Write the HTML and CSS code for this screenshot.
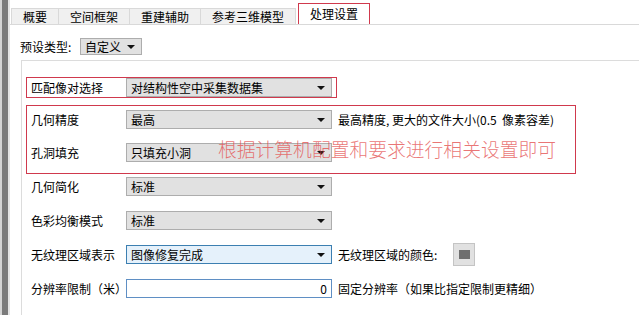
FILE: index.html
```html
<!DOCTYPE html>
<html lang="zh-CN">
  <head>
    <meta charset="UTF-8" />
    <meta name="viewport" content="width=device-width, initial-scale=1.0" />
    <title>处理设置</title>
    <link rel="stylesheet" href="styles.css">
  </head>
  <body>
    <div class="frame">
      <div class="edge"></div>

      <div class="window">
        <div class="tabs">
          <div class="tab">概要</div>
          <div class="tab">空间框架</div>
          <div class="tab">重建辅助</div>
          <div class="tab">参考三维模型</div>
          <div class="tab active">处理设置</div>
        </div>

        <div class="page">
          <div class="preset">
            <span>预设类型:</span>
            <div class="select small">自定义</div>
          </div>

          <div class="group">
            <div class="mark first">
              <div class="row">
                <label>匹配像对选择</label>
                <div class="select">对结构性空中采集数据集</div>
              </div>
            </div>

            <div class="mark second">
              <div class="row">
                <label>几何精度</label>
                <div class="select">最高</div>
                <span class="note">最高精度, 更大的文件大小(0.5 &nbsp;像素容差)</span>
              </div>
              <div class="row">
                <label>孔洞填充</label>
                <div class="select">只填充小洞</div>
              </div>
              <p class="overlay">根据计算机配置和要求进行相关设置即可</p>
            </div>

            <div class="rows">
              <div class="row">
                <label>几何简化</label>
                <div class="select">标准</div>
              </div>
              <div class="row">
                <label>色彩均衡模式</label>
                <div class="select">标准</div>
              </div>
              <div class="row">
                <label>无纹理区域表示</label>
                <div class="select focus">图像修复完成</div>
                <span class="note color-label">无纹理区域的颜色:</span>
                <div class="swatch"><span></span></div>
              </div>
              <div class="row">
                <label>分辨率限制（米）</label>
                <div class="number">0</div>
                <span class="note">固定分辨率（如果比指定限制更精细）</span>
              </div>
            </div>
          </div>
        </div>
      </div>
    </div>
  </body>
</html>
```

FILE: styles.css
```css
* {
  margin: 0;
  padding: 0;
  box-sizing: border-box;
}

body {
  background-color: white;
  color: black;
  font-family: "Noto Sans CJK SC", "Liberation Sans", sans-serif;
  font-size: 12px;
  height: 315px;
  overflow: hidden;
}

.frame {
  display: flex;
  height: 315px;
}

.edge {
  width: 10px;
  background-color: #7b7b7b;
  border-left: 2px solid #d4d4d4;
  border-right: 2px solid #e4e4e4;
}

.window {
  flex: 1;
  background-color: white;
}

/* tab strip */
.tabs {
  display: flex;
  align-items: flex-end;
  height: 25px;
  padding-left: 1px;
  border-bottom: 1px solid #d9d9d9;
}

.tab {
  height: 16px;
  line-height: 15px;
  padding: 0 11px;
  background-color: #f0f0f0;
  border: 1px solid #d9d9d9;
  border-left: none;
  border-bottom: none;
}

.tab:first-child {
  border-left: 1px solid #d9d9d9;
}

.tab.active {
  height: 21px;
  line-height: 19px;
  margin-left: 2px;
  padding: 0 11px;
  background-color: white;
  border: 1px solid #d0394d;
  border-bottom: none;
}

.page {
  padding: 13px 0 0 10px;
}

.preset {
  display: flex;
  align-items: center;
  gap: 0;
  height: 17px;
}

.preset span {
  width: 60px;
}

/* combo boxes */
.select {
  position: relative;
  width: 206px;
  height: 19px;
  line-height: 17px;
  padding-left: 4px;
  background-color: #e1e1e1;
  border: 1px solid #adadad;
}

.select::after {
  content: "";
  position: absolute;
  right: 6px;
  top: 7px;
  border-left: 4px solid transparent;
  border-right: 4px solid transparent;
  border-top: 4px solid #111;
}

.select.small {
  width: 62px;
  height: 17px;
  line-height: 15px;
}

.select.small::after {
  top: 6px;
}

.select.focus {
  background-color: #e5f1fb;
  border-color: #3c7fb1;
}

.number {
  width: 206px;
  height: 19px;
  line-height: 17px;
  padding-right: 4px;
  text-align: right;
  background-color: white;
  border: 1px solid #5f8fc4;
}

/* settings group */
.group {
  margin: 5px 0 0 1px;
  padding: 16px 0 0 4px;
  height: 260px;
  border: 1px solid #dcdcdc;
  border-right: none;
  border-bottom: none;
}

.row {
  display: flex;
  align-items: center;
  height: 19px;
  white-space: nowrap;
}

.row label {
  width: 99px;
  padding-left: 4px;
}

.note {
  margin-left: 6px;
}

.note.color-label {
  width: 115px;
}

.mark {
  border: 1px solid #d0394d;
}

.mark.first {
  width: 311px;
}

.mark.second {
  position: relative;
  width: 550px;
  margin-top: 7px;
  padding: 4px 0 11px;
  display: flex;
  flex-direction: column;
  gap: 14px;
}

.overlay {
  position: absolute;
  left: 191px;
  top: 33px;
  font-size: 18.8px;
  line-height: 19px;
  font-weight: 300;
  color: rgba(228, 80, 80, 0.78);
  white-space: nowrap;
}

.rows {
  margin-top: 3px;
  padding-left: 1px;
  display: flex;
  flex-direction: column;
  gap: 15px;
}

.swatch {
  width: 22px;
  height: 23px;
  display: flex;
  align-items: center;
  justify-content: center;
  background-color: #e1e1e1;
  border: 1px solid #c4c4c4;
}

.swatch span {
  width: 11px;
  height: 9px;
  background-color: #6f6f6f;
}
```
